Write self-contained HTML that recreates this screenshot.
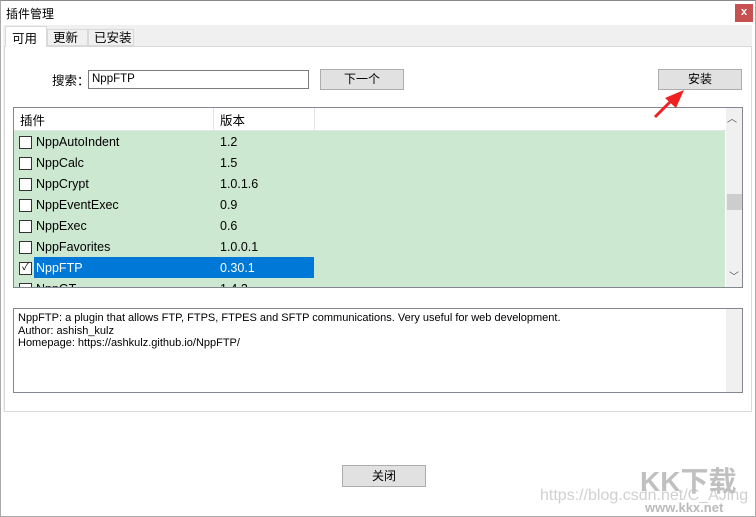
<!DOCTYPE html><html><head><meta charset="utf-8"><style>
body{margin:0;width:756px;height:517px;background:#fff;font-family:"Liberation Sans","Noto Sans CJK SC",sans-serif;font-size:12px;color:#000;position:relative;overflow:hidden}
.a{position:absolute}
.btn{position:absolute;background:#e1e1e1;border:1px solid #adadad;box-sizing:border-box;text-align:center;line-height:19px;font-size:12px}
.row{position:absolute;left:14px;width:711px;height:21px;line-height:21px;font-size:12.5px}
.cb{position:absolute;left:5px;top:5px;width:11px;height:11px;border:1px solid #333;background:#fff}
.n{position:absolute;left:22px;top:1px}
.v{position:absolute;left:206px;top:1px}
</style></head><body>
<div class="a" style="left:0;top:0;width:756px;height:517px;box-sizing:border-box;border:1px solid #aaa;border-top:1px solid #888"></div>
<div class="a" style="left:6px;top:5px;font-size:12px">插件管理</div>
<div class="a" style="left:735px;top:4px;width:18px;height:18px;background:#c75050;color:#fff;text-align:center;line-height:17px;font-size:11px;font-weight:bold">x</div>
<div class="a" style="left:3px;top:25px;width:749px;height:387px;background:#f0f0f0"></div>
<div class="a" style="left:4px;top:46px;width:748px;height:366px;background:#fff;border:1px solid #d9d9d9;box-sizing:border-box"></div>
<div class="a" style="left:5px;top:26px;width:42px;height:21px;background:#fff;border:1px solid #d9d9d9;border-bottom:none;box-sizing:border-box;padding:1px 0 0 6px;font-size:12.5px">可用</div>
<div class="a" style="left:47px;top:29px;width:41px;height:17px;background:#f0f0f0;border:1px solid #d9d9d9;box-sizing:border-box;padding:0 0 0 5px;line-height:16px;font-size:12.5px">更新</div>
<div class="a" style="left:88px;top:29px;width:46px;height:17px;background:#f0f0f0;border:1px solid #d9d9d9;box-sizing:border-box;padding:0 0 0 5px;line-height:16px;font-size:12.5px">已安装</div>
<div class="a" style="left:52px;top:70px;font-size:12.5px">搜索：</div>
<div class="a" style="left:88px;top:70px;width:221px;height:19px;border:1px solid #7a7a7a;box-sizing:border-box;padding:0 3px;line-height:17px;font-size:11.5px">NppFTP</div>
<div class="btn" style="left:320px;top:69px;width:84px;height:21px">下一个</div>
<div class="btn" style="left:658px;top:69px;width:84px;height:21px">安装</div>
<div class="a" style="left:13px;top:107px;width:730px;height:181px;border:1px solid #828790;box-sizing:border-box;background:#fff;overflow:hidden">
<div class="a" style="left:0;top:0;width:728px;height:22px;border-bottom:1px solid #e5e5e5;font-size:12.5px"><span class="a" style="left:6px;top:2px">插件</span><span class="a" style="left:199px;top:0;height:22px;border-left:1px solid #e5e5e5"></span><span class="a" style="left:206px;top:2px">版本</span><span class="a" style="left:300px;top:0;height:22px;border-left:1px solid #e5e5e5"></span></div>
<div class="a" style="left:0;top:23px;width:711px;height:158px;background:#cde8d0"></div>
<div class="a" style="left:712px;top:0;width:17px;height:181px;background:#f0f0f0"></div>
<div class="a" style="left:713px;top:2px;color:#555;font-size:10px">︿</div>
<div class="a" style="left:713px;top:86px;width:15px;height:16px;background:#cdcdcd"></div>
<div class="a" style="left:715px;top:160px;color:#555;font-size:10px">﹀</div>
</div>
<svg class="a" style="left:650px;top:86px" width="40" height="36"><path d="M5 31 L22 14" stroke="#ee2222" stroke-width="3"/><path d="M34 4 L15 12 L26 22 Z" fill="#ee2222"/></svg>
<div class="row" style="top:131px"><div class="cb"></div><span class="n">NppAutoIndent</span><span class="v">1.2</span></div>
<div class="row" style="top:152px"><div class="cb"></div><span class="n">NppCalc</span><span class="v">1.5</span></div>
<div class="row" style="top:173px"><div class="cb"></div><span class="n">NppCrypt</span><span class="v">1.0.1.6</span></div>
<div class="row" style="top:194px"><div class="cb"></div><span class="n">NppEventExec</span><span class="v">0.9</span></div>
<div class="row" style="top:215px"><div class="cb"></div><span class="n">NppExec</span><span class="v">0.6</span></div>
<div class="row" style="top:236px"><div class="cb"></div><span class="n">NppFavorites</span><span class="v">1.0.0.1</span></div>
<div class="row" style="top:257px"><div class="a" style="left:20px;top:0;width:280px;height:21px;background:#0078d7"></div><div class="cb" style="font-size:10px;line-height:10px;text-align:center">✓</div><span class="n" style="color:#fff">NppFTP</span><span class="v" style="color:#fff">0.30.1</span></div>
<div class="row" style="top:278px;height:9px;overflow:hidden"><div class="cb"></div><span class="n">NppGT</span><span class="v">1.4.2</span></div>
<div class="a" style="left:13px;top:308px;width:730px;height:85px;border:1px solid #828790;box-sizing:border-box;background:#fff;font-size:11px;line-height:12.5px;padding:3px 4px">NppFTP: a plugin that allows FTP, FTPS, FTPES and SFTP communications. Very useful for web development.<br>Author: ashish_kulz<br>Homepage: https://ashkulz.github.io/NppFTP/
<div class="a" style="left:712px;top:0;width:16px;height:83px;background:#f0f0f0"></div></div>
<div class="btn" style="left:342px;top:465px;width:84px;height:22px;line-height:20px">关闭</div>
<div class="a" style="left:540px;top:487px;color:#d0d0d0;font-size:16px">https://blog.csdn.net/C_AJing</div>
<div class="a" style="left:640px;top:460px;color:#c0c0c0;font-size:28px;font-weight:bold">KK下载</div>
<div class="a" style="left:645px;top:500px;color:#bbb;font-size:13px;font-weight:bold">www.kkx.net</div>
</body></html>
